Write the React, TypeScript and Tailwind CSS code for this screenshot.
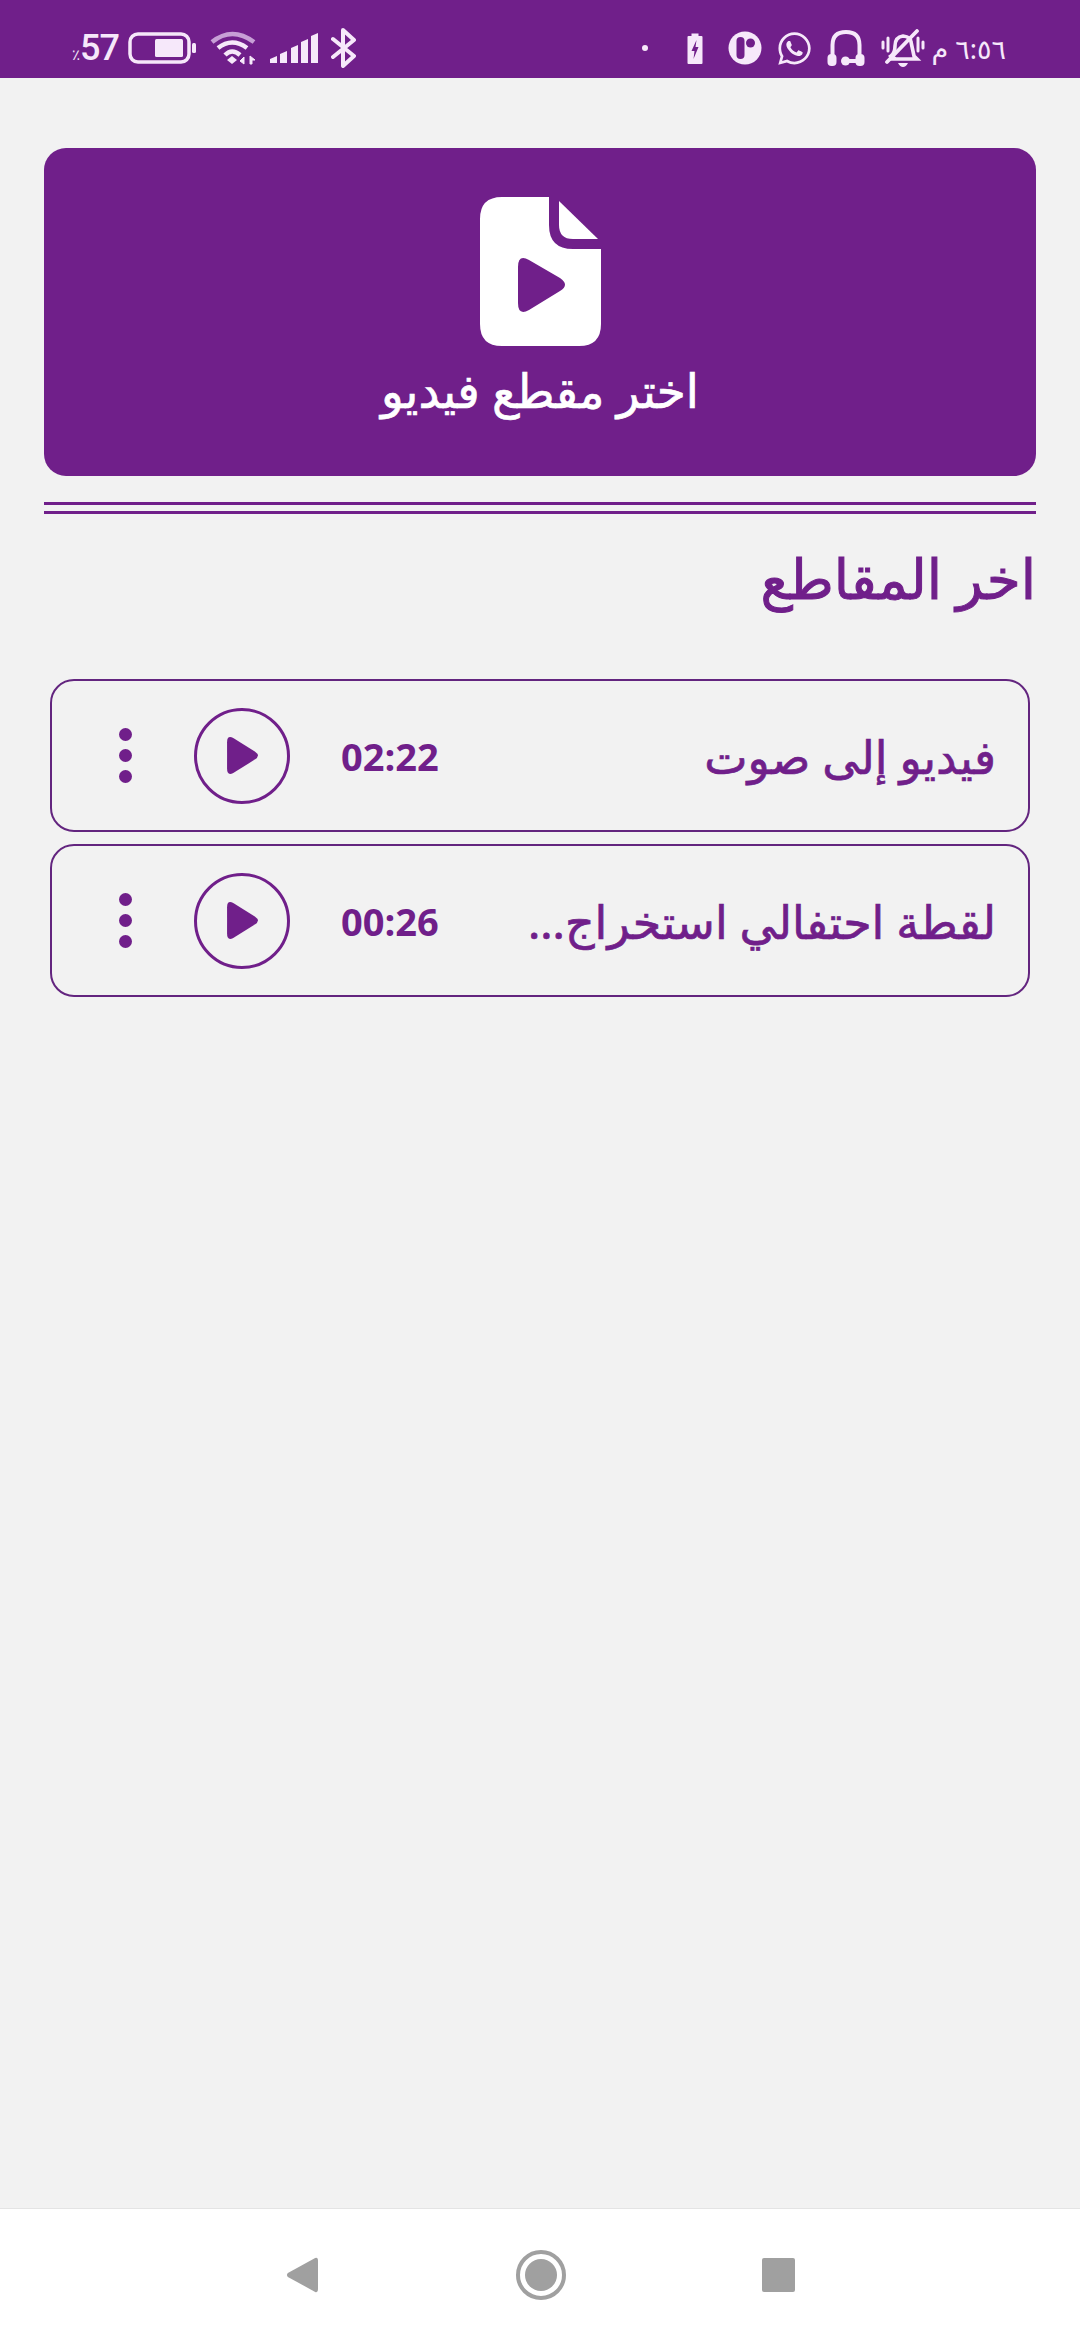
import { FaWhatsapp } from "react-icons/fa";

const arabic = { fontFamily: '"Noto Sans", "DejaVu Sans", sans-serif' };

const StatusLeft = () => (
  <div className="flex items-center">
    <div className="flex items-baseline w-[47px] font-['Roboto',sans-serif] font-medium text-[#f6e8fa] leading-none">
      <span className="text-[15px] w-[11px]">٪</span>
      <span className="text-[36px] tracking-[-1px]">57</span>
    </div>
    {/* battery */}
    <svg className="ml-[9px]" width="68" height="32" viewBox="0 0 68 32">
      <rect x="2" y="2" width="59" height="28" rx="8" fill="none" stroke="#f6e8fa" strokeWidth="3.5" />
      <rect x="27" y="7" width="28" height="18" rx="1.5" fill="#f6e8fa" />
      <rect x="64" y="11" width="4" height="10" rx="1.5" fill="#f6e8fa" />
    </svg>
    {/* wifi */}
    <svg className="ml-[14px]" width="47" height="34" viewBox="0 0 47 34">
      <path d="M2 11 Q22 -5 44 11" fill="none" stroke="#c79fd6" strokeWidth="4.5" />
      <path d="M8 17 Q22 6 37 17" fill="none" stroke="#f6e8fa" strokeWidth="4.5" />
      <path d="M15 24 Q22 17 30 24" fill="none" stroke="#f6e8fa" strokeWidth="4.5" />
      <path d="M17 29 L22 25 L27 29 L22 33 Z" fill="#f6e8fa" />
      <path d="M34 33 V26 L30 30 Z M40 33 V25 L45 29 H42 V33 Z" fill="#f6e8fa" stroke="#f6e8fa" />
    </svg>
    {/* signal */}
    <svg className="ml-[13px]" width="48" height="32" viewBox="0 0 48 32">
      <path d="M0 27 L7 24 V31 H0 Z" fill="#f6e8fa" />
      <path d="M10 22 L17 19 V31 H10 Z" fill="#f6e8fa" />
      <path d="M21 16 L28 13 V31 H21 Z" fill="#f6e8fa" />
      <path d="M31 10 L38 7 V31 H31 Z" fill="#f6e8fa" />
      <path d="M41 4 L48 1 V31 H41 Z" fill="#f6e8fa" />
    </svg>
    {/* bluetooth */}
    <svg className="ml-[13px]" width="25" height="40" viewBox="0 0 25 40">
      <path d="M2 11 L23 28 L12 38 V2 L23 12 L2 29" fill="none" stroke="#f6e8fa" strokeWidth="4" strokeLinejoin="round" strokeLinecap="round" />
    </svg>
  </div>
);

const StatusRight = () => (
  <div className="flex items-center">
    <span className="w-[6px] h-[6px] rounded-full bg-[#f6e8fa]" />
    {/* charging battery */}
    <svg className="ml-[39px]" width="16" height="31" viewBox="0 0 15 31">
      <path d="M4 3 V0.5 H11 V3 H14 Q15 3 15 4 V30 Q15 31 14 31 H1 Q0 31 0 30 V4 Q0 3 1 3 Z" fill="#f6e8fa" />
      <path d="M9 7 L4 18 H7 L6 26 L11 14 H8 Z" fill="#701f8a" />
    </svg>
    {/* app badge */}
    <svg className="ml-[25px]" width="34" height="34" viewBox="0 0 33 34">
      <circle cx="16.5" cy="17" r="16.5" fill="#f6e8fa" />
      <rect x="8" y="6" width="8" height="22" rx="4" fill="#701f8a" />
      <circle cx="22" cy="12" r="4.5" fill="#701f8a" />
    </svg>
    <FaWhatsapp className="ml-[14px] text-[#f6e8fa]" size={37} />
    {/* headset */}
    <svg className="ml-[14px]" width="38" height="36" viewBox="0 0 37 36">
      <path d="M5 26 V15 Q5 2 18.5 2 Q32 2 32 15 V26" fill="none" stroke="#f6e8fa" strokeWidth="4" />
      <rect x="0" y="24" width="9" height="12" rx="4" fill="#f6e8fa" />
      <rect x="28" y="24" width="9" height="12" rx="4" fill="#f6e8fa" />
      <circle cx="18" cy="31" r="4.5" fill="#f6e8fa" />
      <path d="M18 31 H33" stroke="#f6e8fa" strokeWidth="4" />
    </svg>
    {/* muted bell */}
    <svg className="ml-[16px]" width="44" height="38" viewBox="0 0 44 38">
      <path d="M13 29 L10 27 Q14 24 14 17 Q14 8 22 7 Q30 8 30 13 L33 27 L36 30 H12 Z" fill="none" stroke="#f6e8fa" strokeWidth="3.6" />
      <path d="M17 34 H27 Q25 38 22 38 Q19 38 17 34 Z" fill="#f6e8fa" />
      <path d="M6 33 L36 2" stroke="#f6e8fa" strokeWidth="3.8" strokeLinecap="round" />
      <path d="M2 13 V19 M7 9 V22 M37 9 V22 M42 13 V19" stroke="#f6e8fa" strokeWidth="3" strokeLinecap="round" />
    </svg>
    <span dir="rtl" style={arabic} className="ml-[5px] w-[76px] text-[27px] leading-none text-[#f6e8fa] whitespace-nowrap">
      ٦:٥٦ م
    </span>
  </div>
);

const PlayFile = () => (
  <svg width="121" height="149" viewBox="0 0 121 149">
    <path d="M22 0 H69 V28 Q69 52 93 52 H121 V127 Q121 149 99 149 H22 Q0 149 0 127 V22 Q0 0 22 0 Z M38 70 V106 Q38 119 49 113 L80 94 Q90 88 80 81 L49 63 Q38 57 38 70 Z" fill="#fff" fillRule="evenodd" />
    <path d="M79 4 L118 42 H93 Q79 42 79 28 Z" fill="#fff" />
  </svg>
);

const ClipRow = ({ title, time }: { title: string; time: string }) => (
  <div className="flex items-center h-[153px] border-2 border-[#63257f] rounded-[24px]">
    <div className="ml-[67px] flex flex-col gap-[8px]">
      <span className="w-[13px] h-[13px] rounded-full bg-[#701f8a]" />
      <span className="w-[13px] h-[13px] rounded-full bg-[#701f8a]" />
      <span className="w-[13px] h-[13px] rounded-full bg-[#701f8a]" />
    </div>
    <div className="ml-[62px] w-[96px] h-[96px] rounded-full border-[3px] border-[#701f8a] flex items-center justify-center">
      <svg width="33" height="37" viewBox="0 0 32 36">
        <path d="M1 5 Q1 -2 7 1 L28 14 Q34 18 28 22 L7 35 Q1 38 1 31 Z" fill="#701f8a" />
      </svg>
    </div>
    <span className="ml-[51px] font-['Open_Sans',sans-serif] font-bold text-[38px] text-[#701f8a] leading-none">{time}</span>
    <span dir="rtl" style={arabic} className="flex-1 pr-[32px] text-[46px] text-[#701f8a] leading-none whitespace-nowrap [-webkit-text-stroke:0.7px_#701f8a]">
      {title}
    </span>
  </div>
);

export default function App() {
  return (
    <div className="w-[1080px] h-[2340px] flex flex-col bg-[#f2f2f2] overflow-hidden">
      <div className="h-[78px] bg-[#701f8a] flex items-center justify-between pl-[72px] pr-[74px] pt-[18px]">
        <StatusLeft />
        <StatusRight />
      </div>

      <div className="flex-1 px-[44px] pt-[70px]">
        <button className="w-full h-[328px] bg-[#701f8a] rounded-[22px] flex flex-col items-center pt-[49px]">
          <PlayFile />
          <span style={arabic} className="mt-[21px] text-[47px] leading-none text-white [-webkit-text-stroke:0.7px_#ffffff]">اختر مقطع فيديو</span>
        </button>

        <div className="mt-[26px] h-[12px] border-y-[3px] border-[#701f8a]" />

        <h2 dir="rtl" style={arabic} className="mt-[29px] text-[55px] leading-[70px] text-[#701f8a] [-webkit-text-stroke:1px_#701f8a]">اخر المقاطع</h2>

        <div className="mt-[66px] mx-[6px] flex flex-col gap-[12px]">
          <ClipRow title="فيديو إلى صوت" time="02:22" />
          <ClipRow title="لقطة احتفالي استخراج..." time="00:26" />
        </div>
      </div>

      <div className="h-[132px] bg-white border-t border-[#e4e4e4] flex items-center justify-center">
        <svg width="32" height="38" viewBox="0 0 34 38">
          <path d="M31 1 Q34 0 34 4 V34 Q34 38 31 37 L2 21 Q0 19 2 17 Z" fill="#a0a0a0" />
        </svg>
        <div className="ml-[198px] w-[50px] h-[50px] rounded-full border-[4px] border-[#a0a0a0] flex items-center justify-center">
          <div className="w-[32px] h-[32px] rounded-full bg-[#a0a0a0]" />
        </div>
        <div className="ml-[196px] w-[33px] h-[34px] rounded-[2px] bg-[#a0a0a0]" />
      </div>
    </div>
  );
}
